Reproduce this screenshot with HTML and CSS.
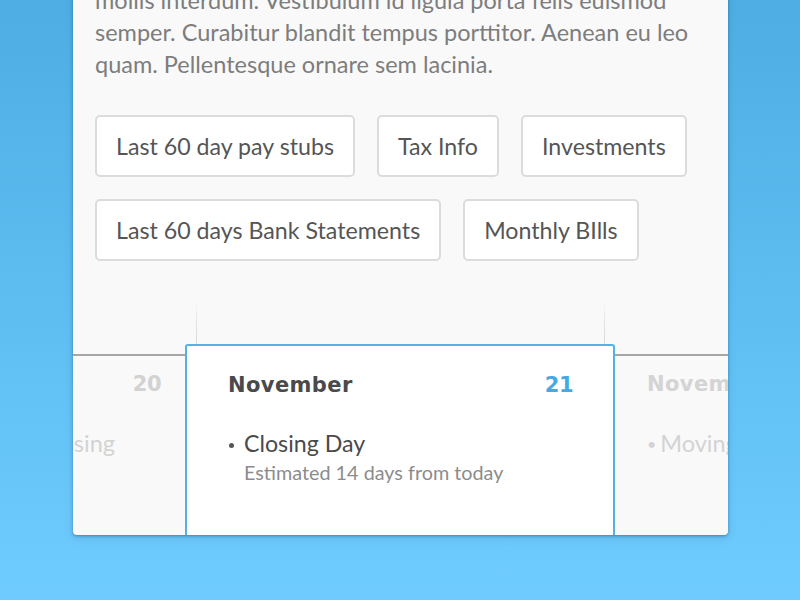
FILE: index.html
```html
<!DOCTYPE html>
<html>
<head>
<meta charset="utf-8">
<link rel="stylesheet" href="styles.css">
</head>
<body>
<div class="card">
  <p class="intro">mollis interdum. Vestibulum id ligula porta felis euismod<br>semper. Curabitur blandit tempus porttitor. Aenean eu leo<br>quam. Pellentesque ornare sem lacinia.</p>
  <div class="docs">
    <button class="doc">Last 60 day pay stubs</button>
    <button class="doc">Tax Info</button>
    <button class="doc">Investments</button>
    <button class="doc">Last 60 days Bank Statements</button>
    <button class="doc">Monthly BIlls</button>
  </div>
  <div class="timeline">
    <div class="ticks">
      <span class="tick"></span>
      <span class="tick"></span>
    </div>
    <div class="rail"></div>
    <div class="days">
      <div class="day day-prev">
        <div class="day-head"><span class="day-num">20</span></div>
        <div class="event-faded">• Closing</div>
      </div>
      <div class="day day-active">
        <div class="day-head">
          <span class="month">November</span>
          <span class="day-num active-num">21</span>
        </div>
        <ul class="events">
          <li class="event">
            <span class="event-title">Closing Day</span>
            <span class="event-sub">Estimated 14 days from today</span>
          </li>
        </ul>
      </div>
      <div class="day day-next">
        <div class="day-head"><span class="month faded-month">November</span></div>
        <div class="event-faded next-event"><span class="dot">•</span>Moving Day</div>
      </div>
    </div>
  </div>
</div>
</body>
</html>
```
FILE: styles.css
```css
html, body {
  margin: 0;
  padding: 0;
}
body {
  width: 800px;
  height: 600px;
  overflow: hidden;
  background: linear-gradient(to bottom, #4eaee3 0%, #5fbff3 55%, #70ccfe 100%);
  font-family: "Source Sans Pro", Lato, "Liberation Sans", sans-serif;
}
.card {
  margin-left: 73px;
  margin-top: -40px;
  width: 655px;
  height: 575px;
  background: #f9f9f9;
  border-radius: 0 0 4px 4px;
  box-shadow: 0 1px 3px rgba(20, 70, 110, 0.45), 0 3px 8px rgba(20, 70, 110, 0.15);
  overflow: hidden;
  display: flex;
  flex-direction: column;
}
.intro {
  margin: 24px 0 0 22px;
  font-size: 23.5px;
  line-height: 32px;
  color: #7d7d7d;
  white-space: nowrap;
}
.docs {
  margin: 35px 0 0 22px;
  display: flex;
  flex-wrap: wrap;
  gap: 22px;
  width: 620px;
}
.doc {
  height: 62px;
  padding: 0 19px;
  background: #fff;
  border: 2px solid #dcdcdc;
  border-radius: 5px;
  font-family: inherit;
  font-size: 23.2px;
  color: #555;
}
.timeline {
  margin-top: 38px;
  flex: 1;
  display: flex;
  flex-direction: column;
}
.ticks {
  height: 55px;
  display: flex;
  padding-left: 123px;
  gap: 407px;
}
.tick {
  width: 1px;
  height: 55px;
  background: linear-gradient(to bottom, rgba(220,220,220,0) 0%, #dedede 60%, #d4d4d4 100%);
}
.rail {
  height: 2px;
  background: #a6a6a6;
}
.days {
  flex: 1;
  display: flex;
}
.day {
  overflow: hidden;
}
.day-prev {
  width: 112px;
  display: flex;
  flex-direction: column;
  align-items: flex-end;
}
.day-head {
  display: flex;
  justify-content: space-between;
  align-items: baseline;
  height: 60px;
  padding-top: 16px;
  box-sizing: border-box;
}
.day-prev .day-head {
  padding-right: 24px;
}
.day-num {
  font-family: "DejaVu Sans", sans-serif;
  font-weight: bold;
  font-size: 21px;
  letter-spacing: -0.5px;
  color: #d2d2d2;
}
.event-faded {
  font-size: 23.5px;
  color: #d3d3d3;
  white-space: nowrap;
  margin-top: 13px;
}
.day-prev .event-faded {
  padding-right: 70px;
}
.day-active {
  width: 430px;
  margin-top: -12px;
  box-sizing: border-box;
  background: #fff;
  border: 2px solid #56b0e6;
  border-bottom: none;
  border-radius: 3px 3px 0 0;
  padding: 0 40px 0 41px;
}
.day-active .day-head {
  height: 82px;
  padding-top: 27px;
}
.month {
  font-family: "DejaVu Sans", sans-serif;
  font-weight: bold;
  font-size: 21px;
  color: #4a4a4a;
  letter-spacing: 0.4px;
}
.active-num {
  color: #46a9e2;
}
.events {
  margin: 0;
  padding: 0;
  list-style: none;
}
.event {
  position: relative;
  padding-left: 16px;
  display: flex;
  flex-direction: column;
}
.event::before {
  content: "";
  position: absolute;
  left: 1px;
  top: 15px;
  width: 5px;
  height: 5px;
  border-radius: 50%;
  background: #555;
}
.event-title {
  font-size: 23.2px;
  line-height: 30px;
  color: #4a4a4a;
}
.event-sub {
  font-size: 19.8px;
  line-height: 28px;
  color: #8c8c8c;
}
.day-next {
  flex: 1;
  padding-left: 32px;
}
.faded-month {
  color: #d4d4d4;
}
.dot {
  font-size: 16px;
  margin-right: 4px;
  vertical-align: 2px;
}
```
